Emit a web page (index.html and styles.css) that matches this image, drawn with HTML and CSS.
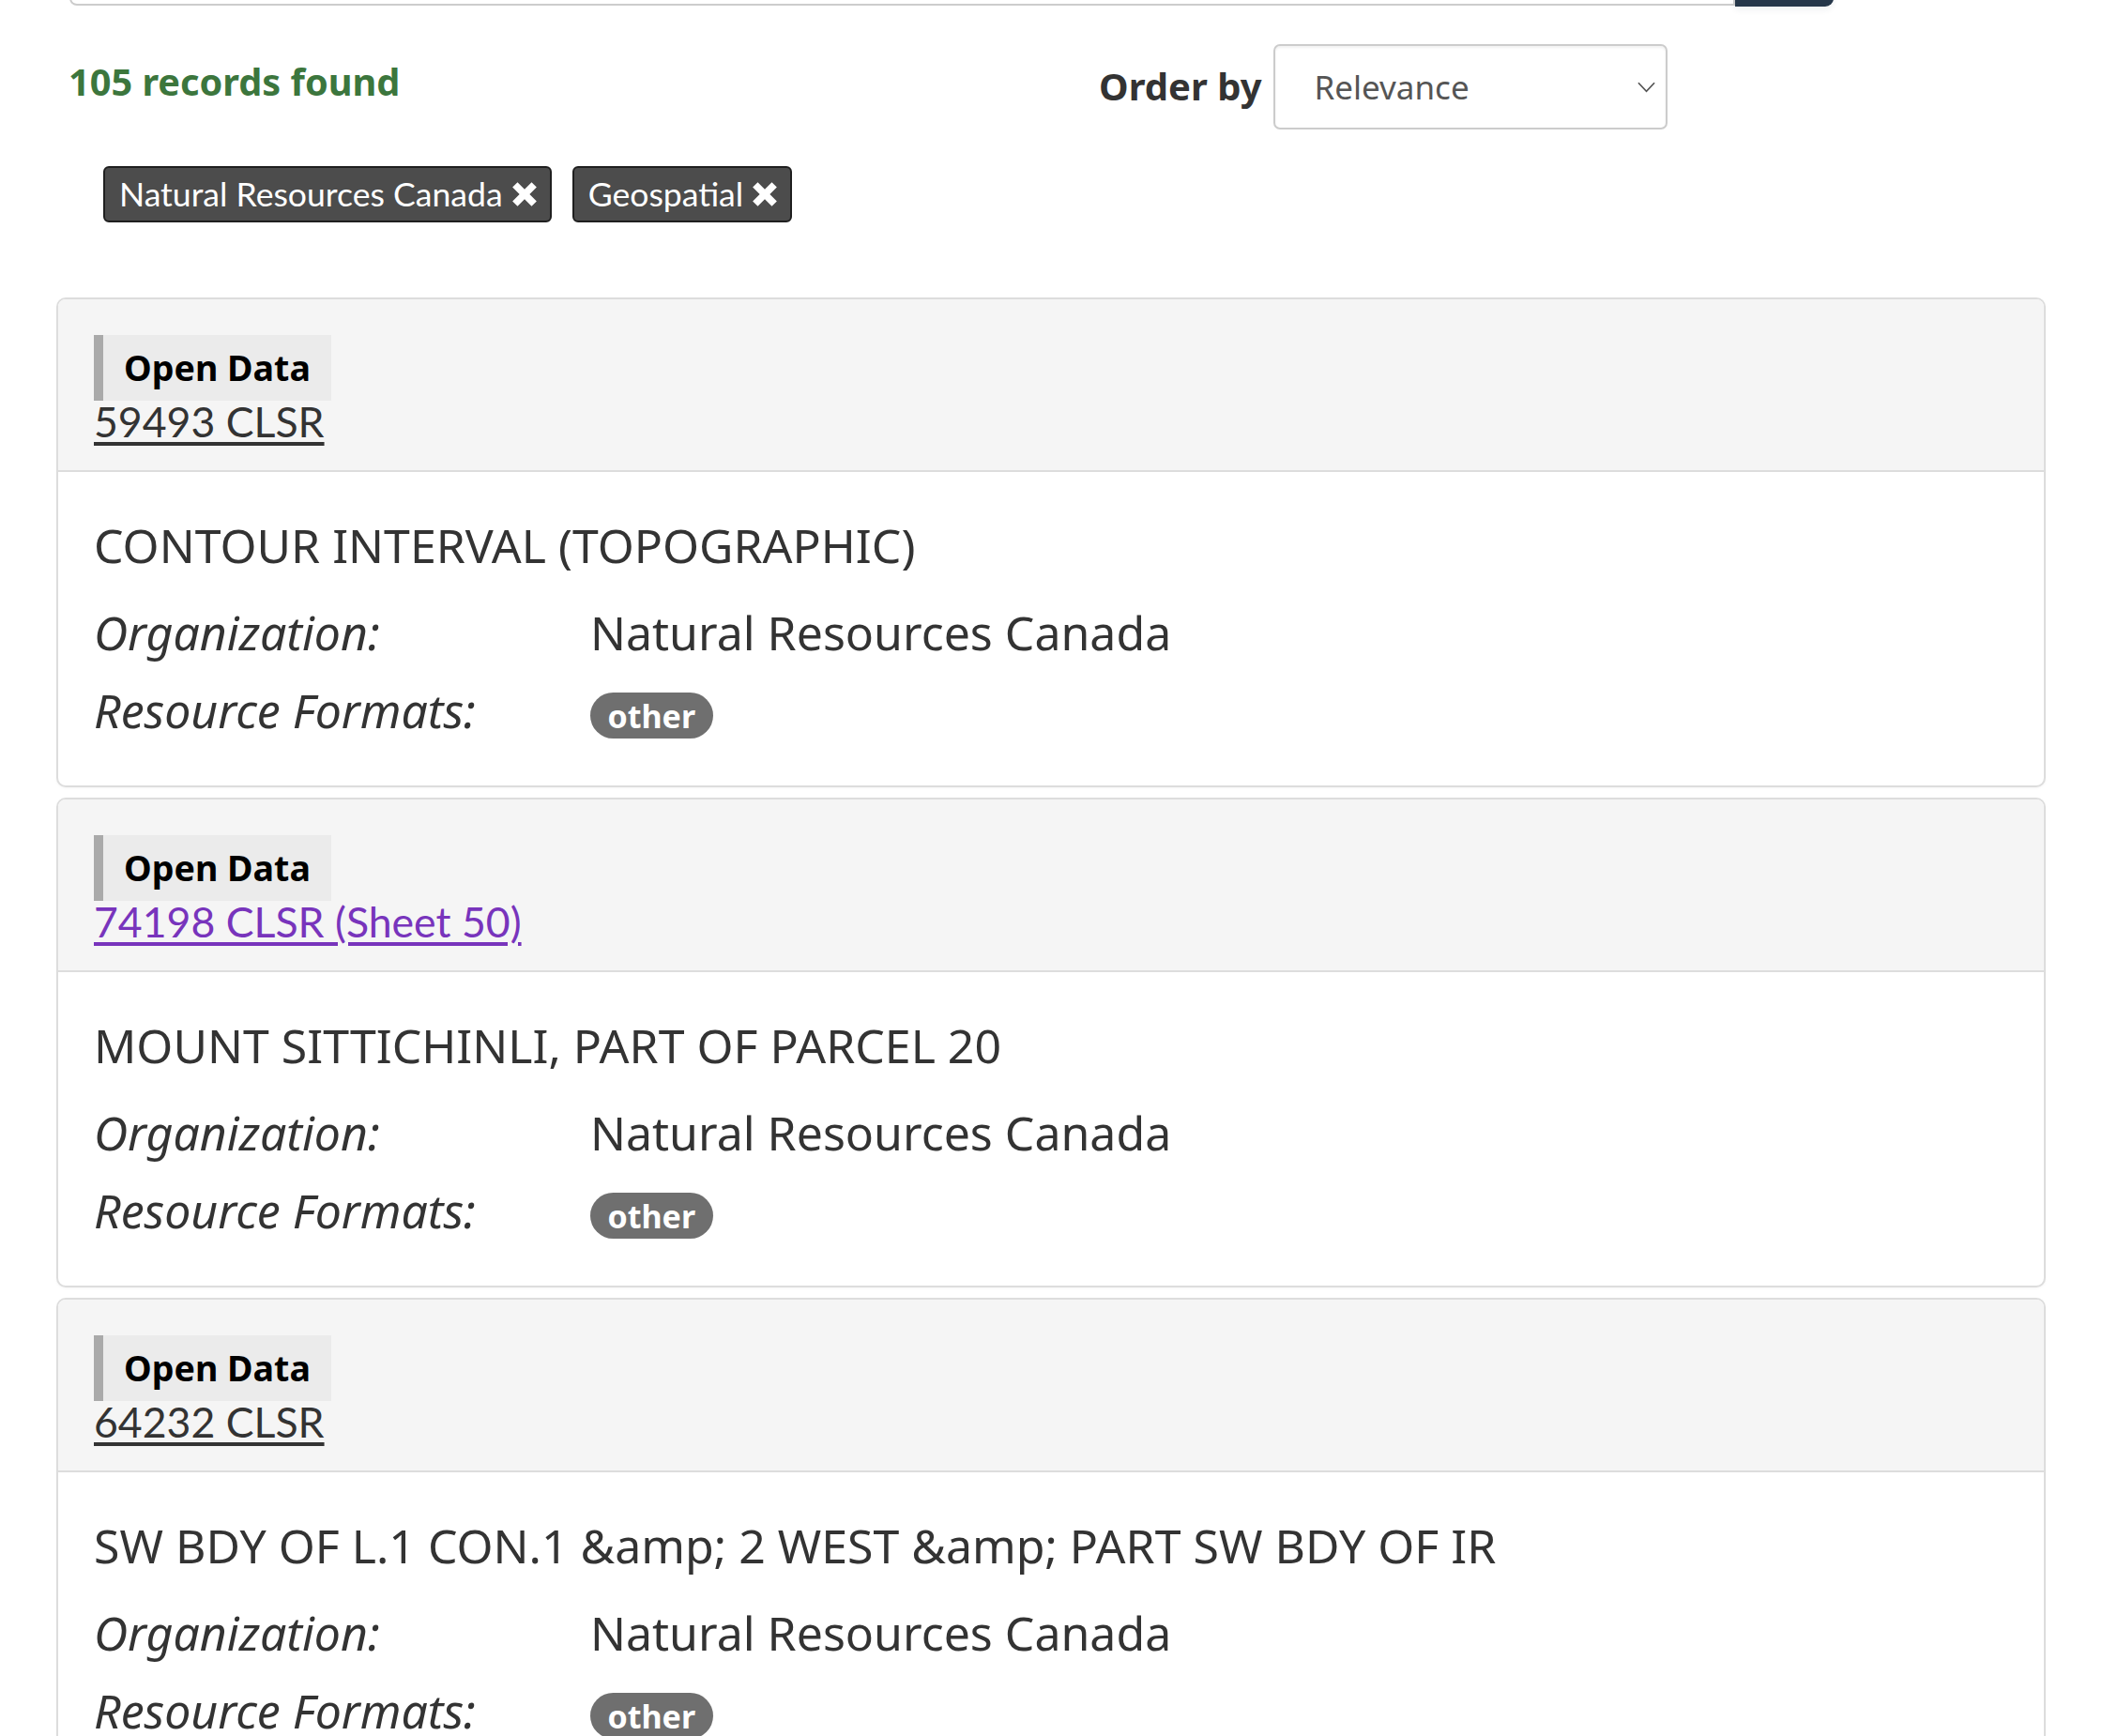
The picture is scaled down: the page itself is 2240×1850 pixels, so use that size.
FILE: index.html
```html
<!DOCTYPE html>
<html lang="en">
<head>
<meta charset="utf-8">
<title>Search results</title>
<link rel="stylesheet" href="styles.css">
</head>
<body>
<div class="search">
  <div class="search-input"></div>
  <div class="search-btn"></div>
</div>

<div class="results-bar">
  <p class="count">105 records found</p>
  <div class="order">
    <label class="order-label" for="sort">Order by</label>
    <div class="select-wrap">
      <select id="sort" class="select">
        <option>Relevance</option>
      </select>
      <svg class="chevron" viewBox="0 0 20 12" width="20" height="12" aria-hidden="true"><path d="M1 1 L10 10.5 L19 1" fill="none" stroke="#555" stroke-width="1.8"/></svg>
    </div>
  </div>
</div>

<div class="chips">
  <span class="chip">Natural Resources Canada <svg class="chip-x" viewBox="0 0 28 28" width="30" height="30" aria-hidden="true"><path d="M2 7 L7 2 L14 9 L21 2 L26 7 L19 14 L26 21 L21 26 L14 19 L7 26 L2 21 L9 14 Z" fill="#fff"/></svg></span>
  <span class="chip">Geospatial <svg class="chip-x" viewBox="0 0 28 28" width="30" height="30" aria-hidden="true"><path d="M2 7 L7 2 L14 9 L21 2 L26 7 L19 14 L26 21 L21 26 L14 19 L7 26 L2 21 L9 14 Z" fill="#fff"/></svg></span>
</div>

<div class="cards">
  <article class="card">
    <header class="card-head">
      <div class="tag">Open Data</div>
      <a class="rec-link" href="#">59493 CLSR</a>
    </header>
    <div class="card-body">
      <h3 class="rec-title">CONTOUR INTERVAL (TOPOGRAPHIC)</h3>
      <dl class="meta">
        <dt>Organization:</dt><dd>Natural Resources Canada</dd>
        <dt>Resource Formats:</dt><dd><span class="badge">other</span></dd>
      </dl>
    </div>
  </article>

  <article class="card">
    <header class="card-head">
      <div class="tag">Open Data</div>
      <a class="rec-link visited" href="#">74198 CLSR (Sheet 50)</a>
    </header>
    <div class="card-body">
      <h3 class="rec-title">MOUNT SITTICHINLI, PART OF PARCEL 20</h3>
      <dl class="meta">
        <dt>Organization:</dt><dd>Natural Resources Canada</dd>
        <dt>Resource Formats:</dt><dd><span class="badge">other</span></dd>
      </dl>
    </div>
  </article>

  <article class="card">
    <header class="card-head">
      <div class="tag">Open Data</div>
      <a class="rec-link" href="#">64232 CLSR</a>
    </header>
    <div class="card-body">
      <h3 class="rec-title">SW BDY OF L.1 CON.1 &amp;amp; 2 WEST &amp;amp; PART SW BDY OF IR</h3>
      <dl class="meta">
        <dt>Organization:</dt><dd>Natural Resources Canada</dd>
        <dt>Resource Formats:</dt><dd><span class="badge">other</span></dd>
      </dl>
    </div>
  </article>
</div>
</body>
</html>
```

FILE: styles.css
```css
html, body {
  margin: 0;
  padding: 0;
  background: #fff;
}

body {
  font-family: "Noto Sans", "Open Sans", sans-serif;
  color: #333;
}

/* top search strip (only the bottom edge is in view) */
.search {
  display: flex;
  margin-left: 74px;
  width: 1880px;
  height: 7px;
}

.search-input {
  flex: 1;
  margin-top: -33px;
  height: 37px;
  border: 2px solid #ccc;
  border-top: 0;
  border-radius: 0 0 0 8px;
  background: #fff;
}

.search-btn {
  width: 105px;
  margin-top: -33px;
  height: 40px;
  background: #26374a;
  border-radius: 0 0 9px 0;
  box-shadow: 0 4px 6px rgba(38, 55, 74, 0.06);
}

/* results bar */
.results-bar {
  display: grid;
  grid-template-columns: 1098px auto;
  align-items: start;
  margin-left: 73px;
  height: 131px;
}

.count {
  margin: 58px 0 0;
  font-size: 39.7px;
  line-height: 44px;
  font-weight: 700;
  color: #3c763d;
}

.order {
  display: flex;
  align-items: flex-start;
  gap: 13px;
}

.order-label {
  margin-top: 63px;
  font-size: 40px;
  line-height: 44px;
  font-weight: 700;
  color: #333;
}

.select-wrap {
  position: relative;
  margin-top: 40px;
}

.select {
  appearance: none;
  -webkit-appearance: none;
  display: block;
  width: 420px;
  height: 91px;
  margin: 0;
  padding: 0 40px 0 41px;
  border: 2px solid #ccc;
  border-radius: 7px;
  background: #fff;
  font-family: "Noto Sans", sans-serif;
  font-size: 35px;
  color: #555;
  box-shadow: inset 0 2px 3px rgba(0, 0, 0, 0.06);
}

.chevron {
  position: absolute;
  right: 13px;
  top: 40px;
  width: 19px;
  height: 12px;
  pointer-events: none;
}

/* filter chips */
.chips {
  display: flex;
  gap: 22px;
  margin: 39px 0 0 110px;
}

.chip {
  display: inline-flex;
  align-items: center;
  gap: 8px;
  height: 60px;
  box-sizing: border-box;
  padding: 0 12px 0 15px;
  border: 2px solid #1f1f1f;
  border-radius: 6px;
  background: #4c4c4c;
  color: #fff;
  font-family: Lato, "Liberation Sans", sans-serif;
  font-size: 35.6px;
  line-height: 1;
}

.chip-x {
  width: 30px;
  height: 30px;
  flex: none;
}

/* result cards */
.cards {
  margin: 80px 60px 0;
}

.card {
  border: 2px solid #ddd;
  border-radius: 10px;
  margin-bottom: 11px;
  background: #fff;
  box-shadow: 0 1px 3px rgba(0, 0, 0, 0.04);
}

.card-head {
  display: flex;
  flex-direction: column;
  align-items: flex-start;
  padding: 38px 38px 28px;
  background: #f5f5f5;
  border-bottom: 2px solid #ddd;
  border-radius: 8px 8px 0 0;
}

.tag {
  padding: 12px 22px 12px 22px;
  border-left: 10px solid #aaa;
  background: #ebebeb;
  color: #000;
  font-size: 37.6px;
  line-height: 45.6px;
  font-weight: 700;
}

.rec-link {
  margin-top: -3px;
  font-family: Lato, "Liberation Sans", sans-serif;
  font-size: 44.6px;
  line-height: 49.5px;
  color: #333;
  text-decoration: underline;
  text-decoration-thickness: 4px;
  text-underline-offset: 5px;
}

.rec-link.visited {
  color: #7834bc;
}

.card-body {
  padding: 51px 38px 39px;
}

.rec-title {
  margin: 0 0 24px;
  font-size: 50px;
  line-height: 55px;
  font-weight: 400;
  color: #333;
}

.meta {
  display: grid;
  grid-template-columns: 529px 1fr;
  margin: 0;
  font-size: 50px;
  line-height: 82.5px;
}

.meta dt {
  font-style: italic;
  color: #333;
}

.meta dd {
  margin: 0;
  color: #333;
}

.badge {
  display: inline-block;
  padding: 7.5px 18.5px;
  border-radius: 25px;
  background: #6f6f6f;
  color: #fff;
  font-size: 34px;
  line-height: 34px;
  font-weight: 700;
}
```
